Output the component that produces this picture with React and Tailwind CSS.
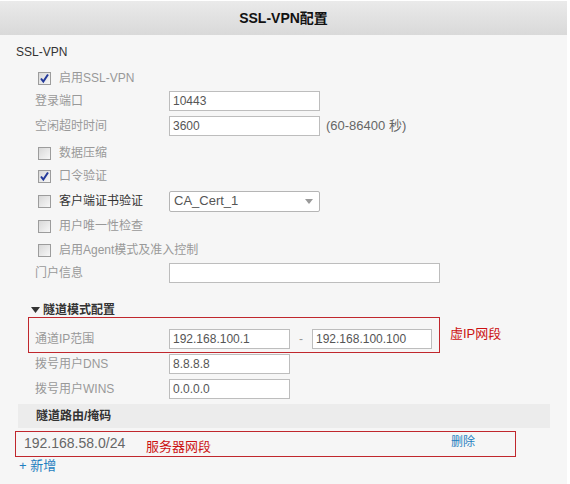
import React from "react";

const F = { fontFamily: '"Liberation Sans", Arial, "Noto Sans CJK SC", sans-serif' };

function Box({ checked }) {
  return (
    <div className="w-[13px] h-[13px] border border-[#9c9c9c] bg-gradient-to-br from-[#d8d8d8] to-[#f7f7f7] flex items-center justify-center shrink-0">
      {checked && (
        <svg width="11" height="11" viewBox="0 0 11 11">
          <path d="M2 5.5 L4.3 8.5 L9 1.5" stroke="#23399a" strokeWidth="2" fill="none" />
        </svg>
      )}
    </div>
  );
}

function CheckRow({ label, checked, mt, dark, children }) {
  return (
    <div className={`flex items-center h-[20px] ${mt}`}>
      <div className="w-[38px] shrink-0" />
      <Box checked={checked} />
      <span className={`ml-[8px] w-[110px] shrink-0 whitespace-nowrap text-[12px] ${dark ? "text-[#333]" : "text-[#999]"}`}>{label}</span>
      {children}
    </div>
  );
}

function Input({ value, w }) {
  return (
    <div className={`h-[20px] ${w} shrink-0 border border-[#bdbdbd] bg-white text-[12px] text-[#555] pl-[3px] flex items-center`}>
      {value}
    </div>
  );
}

function InputRow({ label, value, w = "w-[151px]", mt, after }) {
  return (
    <div className={`flex items-center h-[20px] ${mt}`}>
      <span className="pl-[35px] w-[169px] shrink-0 whitespace-nowrap text-[12px] text-[#999]">{label}</span>
      <Input value={value} w={w} />
      {after}
    </div>
  );
}

export default function App() {
  return (
    <div className="w-[570px] h-[484px] bg-white overflow-hidden" style={F}>
      <div className="w-[567px] h-[484px] bg-[#f6f6f6] flex flex-col">
        <div className="h-[35px] shrink-0 border-t border-white bg-gradient-to-b from-[#eaeaea] to-[#d9d9d9] flex items-center justify-center text-[14px] font-bold text-[#111]">
          SSL-VPN配置
        </div>
        <div className="mt-[7px] h-[20px] flex items-center pl-[16px] text-[12px] text-[#333]">SSL-VPN</div>
        <CheckRow label="启用SSL-VPN" checked mt="mt-[6px]" />
        <InputRow label="登录端口" value="10443" mt="mt-[3px]" />
        <InputRow
          label="空闲超时时间"
          value="3600"
          mt="mt-[5px]"
          after={<span className="ml-[6px] text-[13px] text-[#666] whitespace-nowrap">(60-86400 秒)</span>}
        />
        <CheckRow label="数据压缩" mt="mt-[7px]" />
        <CheckRow label="口令验证" checked mt="mt-[3px]" />
        <CheckRow label="客户端证书验证" dark mt="mt-[5px]">
          <div className="h-[21px] w-[151px] border border-[#b5b5b5] rounded-[2px] bg-white flex items-center justify-between pl-[4px] pr-[6px] text-[13px] text-[#555]">
            <span>CA_Cert_1</span>
            <svg width="8" height="5" viewBox="0 0 8 5"><path d="M0 0 H8 L4 5 Z" fill="#9a9a9a" /></svg>
          </div>
        </CheckRow>
        <CheckRow label="用户唯一性检查" mt="mt-[5px]" />
        <CheckRow label="启用Agent模式及准入控制" mt="mt-[4px]" />
        <InputRow label="门户信息" value="" w="w-[271px]" mt="mt-[3px]" />
        <div className="mt-[20px] h-[14px] flex items-center pl-[31px] text-[12px] font-bold text-[#333]">
          <svg width="9" height="6" viewBox="0 0 9 6" className="mr-[3px]"><path d="M0 0 H9 L4.5 6 Z" fill="#333" /></svg>
          隧道模式配置
        </div>
        <div className="flex items-center">
          <div className="ml-[28px] w-[412px] h-[36px] shrink-0 border border-[#c0272d] flex items-center pt-[10px] pb-[2px]">
            <span className="pl-[6px] w-[140px] shrink-0 text-[12px] text-[#999]">通道IP范围</span>
            <Input value="192.168.100.1" w="w-[121px]" />
            <span className="w-[22px] text-center text-[12px] text-[#999]">-</span>
            <Input value="192.168.100.100" w="w-[120px]" />
          </div>
          <span className="ml-[10px] text-[13px] text-[#cc1111] -mt-[2px]">虚IP网段</span>
        </div>
        <InputRow label="拨号用户DNS" value="8.8.8.8" w="w-[121px]" mt="mt-[1px]" />
        <InputRow label="拨号用户WINS" value="0.0.0.0" w="w-[121px]" mt="mt-[5px]" />
        <div className="mt-[5px] ml-[18px] w-[532px] h-[24px] bg-[#ececec] flex items-center pl-[18px] text-[12px] font-bold text-[#333]">
          隧道路由/掩码
        </div>
        <div className="mt-[3px] ml-[15px] w-[501px] h-[26px] border border-[#c0272d] flex items-center">
          <span className="pl-[8px] w-[130px] shrink-0 text-[14px] text-[#666] -mt-[2px]">192.168.58.0/24</span>
          <span className="text-[13px] text-[#cc1111] mt-[5px]">服务器网段</span>
          <span className="ml-auto mr-[40px] text-[12px] text-[#1f7fc0] -mt-[4px]">删除</span>
        </div>
        <div className="mt-[2px] h-[14px] flex items-center pl-[19px] text-[13px] text-[#1f7fc0]">+ 新增</div>
      </div>
    </div>
  );
}
